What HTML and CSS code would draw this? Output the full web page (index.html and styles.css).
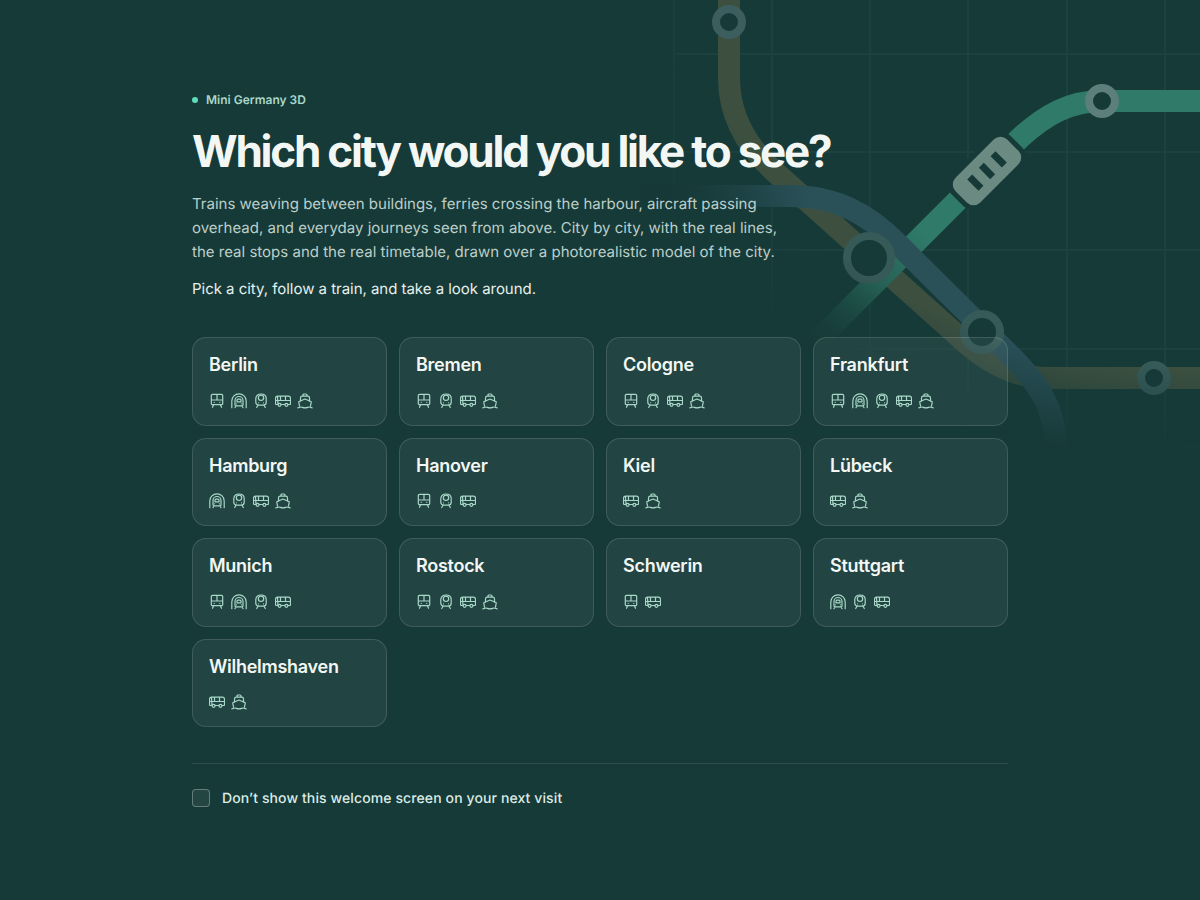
FILE: index.html
```html
<!DOCTYPE html>
<html lang="en">
<head>
<meta charset="utf-8">
<title>Mini Germany 3D</title>
<link rel="stylesheet" href="styles.css">
</head>
<body>
<svg class="defs" width="0" height="0" aria-hidden="true">
  <symbol id="i-train" viewBox="0 0 16 16"><path d="M3.500 1.300h9a1.200 1.200 0 0 1 1.200 1.200v8a1.200 1.200 0 0 1-1.200 1.200h-9a1.200 1.200 0 0 1-1.200-1.200v-8a1.200 1.200 0 0 1 1.200-1.200zM2.300 7h11.400M8 1.300V7M4.600 11.700l-1.100 2.600M11.400 11.700l1.100 2.600M5.200 9.400h.01M10.800 9.400h.01"/></symbol>
  <symbol id="i-tunnel" viewBox="0 0 16 16"><path d="M.8 14.700V8a7.200 7.200 0 0 1 14.400 0v6.700M4 11.800V7.500a4 4 0 0 1 8 0v4.300a1 1 0 0 1-1 1H5a1 1 0 0 1-1-1zM6 8.800V7.200a1 1 0 0 1 1-1h2a1 1 0 0 1 1 1v1.600zM5.600 10.800h.01M10.400 10.800h.01M5 12.800l-1 1.900M11 12.800l1 1.900"/></symbol>
  <symbol id="i-metro" viewBox="0 0 16 16"><path d="M8 1c3 0 5.200 1.700 5.200 4.500v3.700c0 1.700-1.300 3-3 3H5.800c-1.700 0-3-1.300-3-3V5.500C2.800 2.700 5 1 8 1z"/><circle cx="8" cy="4.800" r="2.700"/><path d="M5.500 9.800h.01M10.500 9.800h.01M5 12.200l-1.300 2.300M11 12.200l1.300 2.300"/></symbol>
  <symbol id="i-bus" viewBox="0 0 16 16"><path d="M2.500 3.200h11a2 2 0 0 1 2 2v5.300a1 1 0 0 1-1 1H13M9.800 11.500H6.200M3 11.500H1.500a1 1 0 0 1-1-1V5.200a2 2 0 0 1 2-2zM.5 7.500h15M5.500 3.200v4.300M10.500 3.200v4.300"/><circle cx="4.600" cy="11.800" r="1.500"/><circle cx="11.400" cy="11.800" r="1.500"/></symbol>
  <symbol id="i-ferry" viewBox="0 0 16 16"><path d="M6 3.200V2a1 1 0 0 1 1-1h2a1 1 0 0 1 1 1v1.200M3.500 8.200V5A1.800 1.800 0 0 1 5.300 3.200h5.400A1.800 1.800 0 0 1 12.500 5v3.200M8 6 1.700 8.700l.8 4.300M8 6l6.300 2.700-.8 4.300M.8 14.800c1.200 0 1.800-.8 3.100-.8s1.900.8 4.100.8 2.800-.8 4.100-.8 1.900.8 3.100.8"/></symbol>
</svg>

<div class="screen">
  <svg class="map" viewBox="0 0 1200 900" width="1200" height="900" aria-hidden="true">
    <defs>
      <linearGradient id="fade-green" gradientUnits="userSpaceOnUse" x1="812" y1="348" x2="925" y2="235">
        <stop offset="0" stop-color="#163a38"/>
        <stop offset=".45" stop-color="#235a50"/>
        <stop offset="1" stop-color="#2f7a69"/>
      </linearGradient>
      <linearGradient id="fade-blue" gradientUnits="userSpaceOnUse" x1="670" y1="0" x2="810" y2="0">
        <stop offset="0" stop-color="#163a38"/>
        <stop offset="1" stop-color="#2a5058"/>
      </linearGradient>
    </defs>
    <g class="grid">
      <path d="M674 0V900M772 0V900M870 0V900M968 0V900M1067 0V900M1165 0V900"/>
      <path d="M674 54H1200M674 152H1200M674 250H1200M674 349H1200M674 447H1200"/>
    </g>
    <path class="line olive" d="M729 -10V78C729 115 745 145 775 172L968 345C995 368 1020 378 1050 378H1210"/>
    <path class="line green" d="M1210 101H1102C1070 101 1045 115 1020 138L800 358"/>
    <path class="line blue" d="M640 196H790C835 196 867 213 897 243L1010 355C1040 385 1056 410 1056 450"/>
    <circle class="stop s1" cx="729" cy="22" r="13"/>
    <circle class="stop s2" cx="1102" cy="101" r="13"/>
    <circle class="stop s3" cx="869" cy="258" r="22"/>
    <circle class="stop s3" cx="982" cy="332" r="18"/>
    <circle class="stop s3" cx="1154" cy="378" r="13"/>
    <g transform="translate(987 171) rotate(-45)">
      <rect class="tram" x="-39" y="-20" width="78" height="40" rx="12"/>
      <path class="slots" d="M-16.500 -8V8M0 -8V8M16.500 -8V8"/>
    </g>
  </svg>

  <main class="content">
    <p class="eyebrow"><span class="dot"></span>Mini Germany 3D</p>
    <h1>Which city would you like to see?</h1>
    <p class="lead">Trains weaving between buildings, ferries crossing the harbour, aircraft passing overhead, and everyday journeys seen from above. City by city, with the real lines, the real stops and the real timetable, drawn over a photorealistic model of the city.</p>
    <p class="cta">Pick a city, follow a train, and take a look around.</p>

    <div class="cities">
      <button class="city"><span class="name">Berlin</span><span class="modes"><svg class="ic"><use href="#i-train"/></svg><svg class="ic"><use href="#i-tunnel"/></svg><svg class="ic"><use href="#i-metro"/></svg><svg class="ic"><use href="#i-bus"/></svg><svg class="ic"><use href="#i-ferry"/></svg></span></button>
      <button class="city"><span class="name">Bremen</span><span class="modes"><svg class="ic"><use href="#i-train"/></svg><svg class="ic"><use href="#i-metro"/></svg><svg class="ic"><use href="#i-bus"/></svg><svg class="ic"><use href="#i-ferry"/></svg></span></button>
      <button class="city"><span class="name">Cologne</span><span class="modes"><svg class="ic"><use href="#i-train"/></svg><svg class="ic"><use href="#i-metro"/></svg><svg class="ic"><use href="#i-bus"/></svg><svg class="ic"><use href="#i-ferry"/></svg></span></button>
      <button class="city"><span class="name">Frankfurt</span><span class="modes"><svg class="ic"><use href="#i-train"/></svg><svg class="ic"><use href="#i-tunnel"/></svg><svg class="ic"><use href="#i-metro"/></svg><svg class="ic"><use href="#i-bus"/></svg><svg class="ic"><use href="#i-ferry"/></svg></span></button>
      <button class="city"><span class="name">Hamburg</span><span class="modes"><svg class="ic"><use href="#i-tunnel"/></svg><svg class="ic"><use href="#i-metro"/></svg><svg class="ic"><use href="#i-bus"/></svg><svg class="ic"><use href="#i-ferry"/></svg></span></button>
      <button class="city"><span class="name">Hanover</span><span class="modes"><svg class="ic"><use href="#i-train"/></svg><svg class="ic"><use href="#i-metro"/></svg><svg class="ic"><use href="#i-bus"/></svg></span></button>
      <button class="city"><span class="name">Kiel</span><span class="modes"><svg class="ic"><use href="#i-bus"/></svg><svg class="ic"><use href="#i-ferry"/></svg></span></button>
      <button class="city"><span class="name">Lübeck</span><span class="modes"><svg class="ic"><use href="#i-bus"/></svg><svg class="ic"><use href="#i-ferry"/></svg></span></button>
      <button class="city"><span class="name">Munich</span><span class="modes"><svg class="ic"><use href="#i-train"/></svg><svg class="ic"><use href="#i-tunnel"/></svg><svg class="ic"><use href="#i-metro"/></svg><svg class="ic"><use href="#i-bus"/></svg></span></button>
      <button class="city"><span class="name">Rostock</span><span class="modes"><svg class="ic"><use href="#i-train"/></svg><svg class="ic"><use href="#i-metro"/></svg><svg class="ic"><use href="#i-bus"/></svg><svg class="ic"><use href="#i-ferry"/></svg></span></button>
      <button class="city"><span class="name">Schwerin</span><span class="modes"><svg class="ic"><use href="#i-train"/></svg><svg class="ic"><use href="#i-bus"/></svg></span></button>
      <button class="city"><span class="name">Stuttgart</span><span class="modes"><svg class="ic"><use href="#i-tunnel"/></svg><svg class="ic"><use href="#i-metro"/></svg><svg class="ic"><use href="#i-bus"/></svg></span></button>
      <button class="city"><span class="name">Wilhelmshaven</span><span class="modes"><svg class="ic"><use href="#i-bus"/></svg><svg class="ic"><use href="#i-ferry"/></svg></span></button>
    </div>

    <label class="skip"><span class="box"></span>Don’t show this welcome screen on your next visit</label>
  </main>
</div>
</body>
</html>
```

FILE: styles.css
```css
* { box-sizing: border-box; }
html, body { margin: 0; padding: 0; }
body {
  background: #163a38;
  color: #f2f7f4;
  font-family: "Inter", "Liberation Sans", sans-serif;
  text-rendering: geometricPrecision;
}
.defs { position: absolute; }
.screen {
  position: relative;
  height: 900px;
  overflow: hidden;
}
.map {
  position: absolute;
  inset: 0;
  -webkit-mask-image: radial-gradient(ellipse 620px 460px at 1200px 0, #000 80%, transparent 100%);
  mask-image: radial-gradient(ellipse 620px 460px at 1200px 0, #000 80%, transparent 100%);
}
.grid path { fill: none; stroke: #1c4240; stroke-width: 2; }
.line { fill: none; stroke-width: 22; }
.olive { stroke: #3d5040; }
.green { stroke: url(#fade-green); }
.blue { stroke: url(#fade-blue); }
.stop { fill: #163a38; stroke-width: 8; }
.s1 { stroke: #3c5e5e; }
.s2 { stroke: #5c7f7c; }
.s3 { stroke: #365a58; }
.tram { fill: #6b8a81; stroke: #163a38; stroke-width: 5; }
.slots { fill: none; stroke: #163a38; stroke-width: 7; }

.content {
  position: relative;
  width: 816px;
  margin: 0 auto;
  padding-top: 92px;
}
.eyebrow {
  display: flex;
  align-items: center;
  gap: 8px;
  margin: 0;
  font-size: 12px;
  line-height: 16px;
  font-weight: 600;
  color: #a9d8c8;
}
.dot {
  width: 6px;
  height: 6px;
  border-radius: 50%;
  background: #5fdcb9;
}
h1 {
  margin: 15px 0 0;
  font-size: 44px;
  line-height: 56px;
  font-weight: 700;
  letter-spacing: -2.230px;
  color: #f2f7f4;
}
.lead {
  width: 600px;
  margin: 13px 0 0;
  font-size: 15px;
  line-height: 24px;
  letter-spacing: .01px;
  color: #bccfc9;
}
.cta {
  margin: 13px 0 0;
  font-size: 15px;
  line-height: 24px;
  letter-spacing: -.03px;
  color: #e6f0ec;
}
.cities {
  display: grid;
  grid-template-columns: repeat(4, 1fr);
  gap: 12px;
  margin-top: 36px;
}
.city {
  display: flex;
  flex-direction: column;
  align-items: flex-start;
  gap: 15.800px;
  height: 88.500px;
  padding: 15px 16px;
  border: 1px solid rgba(255,255,255,.13);
  border-radius: 14px;
  background: rgba(255,255,255,.055);
  color: #f2f7f4;
  font: inherit;
  text-align: left;
}
.name {
  font-size: 18px;
  line-height: 24px;
  font-weight: 600;
  letter-spacing: -.015em;
}
.modes { display: flex; gap: 6px; }
.ic {
  width: 16px;
  height: 16px;
  fill: none;
  stroke: #a8d8c8;
  stroke-width: 1.200;
  stroke-linecap: round;
  stroke-linejoin: round;
}
.skip {
  display: flex;
  align-items: flex-start;
  gap: 12px;
  margin-top: 36px;
  padding-top: 25px;
  border-top: 1px solid rgba(255,255,255,.1);
  font-size: 14px;
  line-height: 20px;
  font-weight: 500;
  letter-spacing: .11px;
  color: #dcece6;
}
.box {
  width: 18px;
  height: 18px;
  border: 1px solid rgba(255,255,255,.3);
  border-radius: 4px;
  background: rgba(255,255,255,.06);
}
```
